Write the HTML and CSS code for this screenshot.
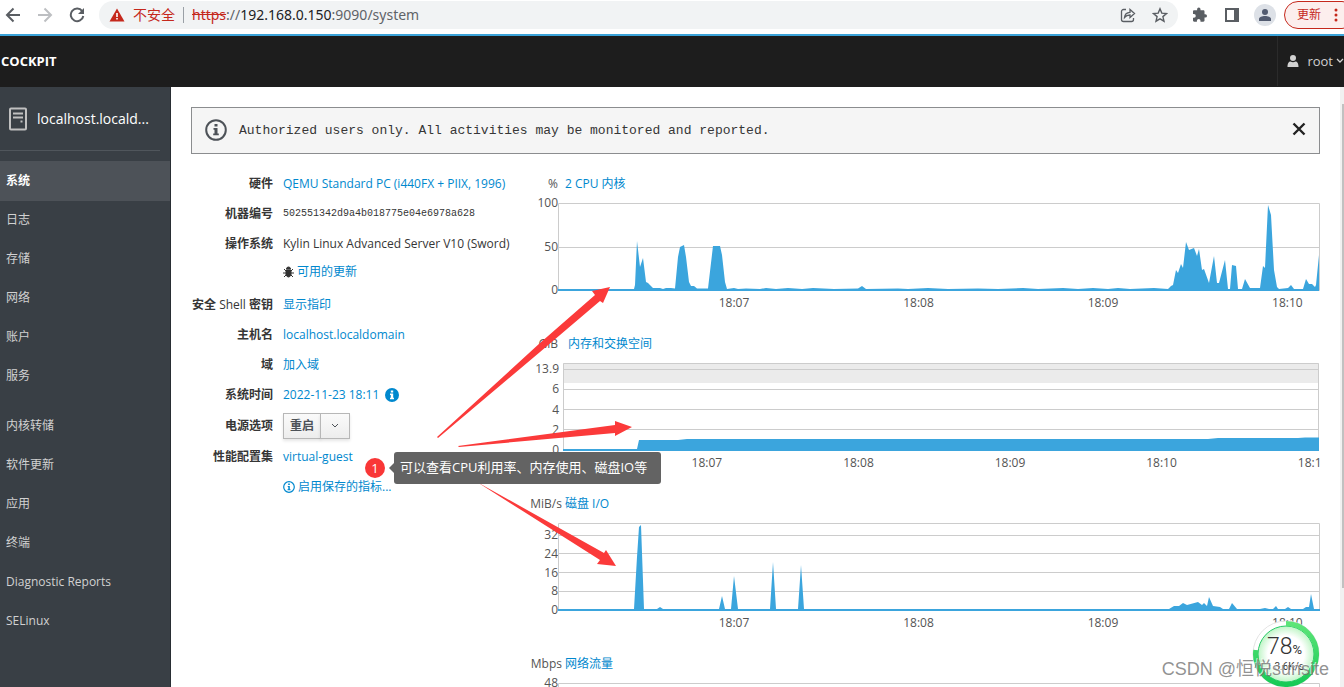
FILE: index.html
```html
<!DOCTYPE html>
<html lang="zh-CN">
<head>
<meta charset="utf-8">
<title>Cockpit</title>
<link rel="stylesheet" href="styles.css">
</head>
<body>
<div class="browser">
  <button class="tool" aria-label="后退"><svg width="16" height="16" viewBox="0 0 16 16" fill="none" stroke="#5a5e63" stroke-width="2"><path d="M15 8H2M8.500 1.500L2 8l6.500 6.500"/></svg></button>
  <button class="tool" aria-label="前进"><svg width="16" height="16" viewBox="0 0 16 16" fill="none" stroke="#bdbfc2" stroke-width="2"><path d="M1 8h13M7.500 1.500L14 8l-6.500 6.500"/></svg></button>
  <button class="tool" aria-label="刷新"><svg width="16" height="16" viewBox="0 0 16 16" fill="none" stroke="#5a5e63" stroke-width="2"><path d="M13.200 4.200A6.300 6.300 0 1 0 14.300 9"/><path d="M15 1v6H9z" fill="#5a5e63" stroke="none"/></svg></button>
  <div class="address">
    <svg width="16" height="14" viewBox="0 0 16 14"><path d="M8 0.500L15.500 13.500H0.500z" fill="#c5281c"/><path d="M7.200 5h1.600v4H7.200zM7.200 10h1.600v1.600H7.200z" fill="#fff"/></svg>
    <span class="unsafe">不安全</span>
    <span class="url"><s>https</s>://<b>192.168.0.150</b>:9090/system</span>
    <button class="tool" aria-label="分享"><svg width="16" height="16" viewBox="0 0 16 16" fill="none" stroke="#5a5e63" stroke-width="1.300"><path d="M6 2.500H3.500a2 2 0 0 0-2 2v8a2 2 0 0 0 2 2h8a2 2 0 0 0 2-2V11"/><path d="M4.500 10.500c.3-3.500 2-5 5.500-5.200V2.500l4.500 4-4.500 4V8C7.500 8 6 8.600 4.500 10.500z"/></svg></button>
    <button class="tool" aria-label="收藏"><svg width="16" height="16" viewBox="0 0 16 16" fill="none" stroke="#5a5e63" stroke-width="1.400"><path d="M8 1.800l1.800 4.300 4.700.4-3.600 3.100 1.100 4.600L8 11.800l-4 2.400 1.100-4.600-3.600-3.100 4.700-.4z"/></svg></button>
  </div>
  <button class="tool ext" aria-label="扩展程序"><svg width="16" height="16" viewBox="0 0 16 16" fill="#5a5e63"><path d="M13.300 7.200h-.8V4.500c0-.7-.5-1.200-1.200-1.200H8.500v-1a1.700 1.700 0 0 0-3.400 0v1H2.200C1.500 3.300 1 3.800 1 4.500v2.600h1a1.800 1.800 0 0 1 0 3.600H1v2.800c0 .7.500 1.200 1.200 1.200h2.700v-1a1.800 1.800 0 0 1 3.600 0v1h2.800c.7 0 1.200-.5 1.200-1.200v-2.900h.8a1.700 1.700 0 0 0 0-3.400z"/></svg></button>
  <button class="tool" aria-label="侧边栏"><svg width="16" height="16" viewBox="0 0 16 16"><path d="M1 1h14v14H1zM3 3v10h7V3z" fill="#5a5e63" fill-rule="evenodd"/></svg></button>
  <button class="profile" aria-label="用户"><svg width="14" height="14" viewBox="0 0 14 14" fill="#525b70"><circle cx="7" cy="4" r="3"/><path d="M1 13v-2c0-2 3-3 6-3s6 1 6 3v2z"/></svg></button>
  <button class="update">更新<svg width="4" height="14" viewBox="0 0 4 14" fill="#c5281c"><circle cx="2" cy="2" r="1.500"/><circle cx="2" cy="7" r="1.500"/><circle cx="2" cy="12" r="1.500"/></svg></button>
</div>
<header class="masthead">
  <strong>COCKPIT</strong>
  <button class="user"><svg width="12" height="12" viewBox="0 0 12 12" fill="#d1d1d1"><circle cx="6" cy="3" r="3"/><path d="M.5 12c0-4 1.500-5.500 3-5.500q2.500 1.500 5 0c1.500 0 3 1.500 3 5.500z"/></svg><span>root</span><svg width="9" height="6" viewBox="0 0 9 6" fill="none" stroke="#d1d1d1" stroke-width="1.300"><path d="M2 1l3 3 3-3"/></svg></button>
</header>
<div class="shell">
  <nav class="sidebar">
    <a class="host" href="#"><svg width="20" height="24" viewBox="0 0 20 24" fill="none" stroke="#c0c0c0" stroke-width="2"><rect x="2" y="1.500" width="16" height="21" rx="1"/><path d="M5 6.500h10M5 10.500h10"/><path d="M12.500 14.500h2" /></svg><span>localhost.locald...</span></a>
    <ul class="menu">
      <li><a class="active" href="#">系统</a></li>
      <li><a href="#">日志</a></li>
      <li><a href="#">存储</a></li>
      <li><a href="#">网络</a></li>
      <li><a href="#">账户</a></li>
      <li><a href="#">服务</a></li>
    </ul>
    <ul class="menu">
      <li><a href="#">内核转储</a></li>
      <li><a href="#">软件更新</a></li>
      <li><a href="#">应用</a></li>
      <li><a href="#">终端</a></li>
      <li><a href="#">Diagnostic Reports</a></li>
      <li><a href="#">SELinux</a></li>
    </ul>
  </nav>
  <main class="content">
    <div class="motd">
      <svg width="24" height="24" viewBox="0 0 24 24"><circle cx="12" cy="11" r="9.800" fill="none" stroke="#4d5258" stroke-width="2"/><path d="M10.500 5h3v2.500h-3zM9.500 9h4v5.500h1.300v1.700H9.200v-1.700h1.300v-3.800h-1z" fill="#4d5258"/></svg>
      <span>Authorized users only. All activities may be monitored and reported.</span>
      <button aria-label="关闭"><svg width="14" height="18" viewBox="0 0 14 18" stroke="#222" stroke-width="2.400"><path d="M1.500 1.500l11 11M12.500 1.500l-11 11"/></svg></button>
    </div>
    <div class="columns">
      <dl class="info">
        <dt>硬件</dt><dd><a href="#">QEMU Standard PC (i440FX + PIIX, 1996)</a></dd>
        <dt>机器编号</dt><dd class="machine">502551342d9a4b018775e04e6978a628</dd>
        <dt>操作系统</dt><dd>Kylin Linux Advanced Server V10 (Sword)</dd>
        <dd class="updates"><svg width="11" height="12" viewBox="0 0 11 12" fill="none" stroke="#333" stroke-width="1"><path d="M3.500 3a2 2 0 0 1 4 0zM3 4h5v5q-1 2-2.500 2T3 9z" fill="#333"/><path d="M0 7h11M1 3l2 2M10 3L8 5M1 11l2-2M10 11L8 9"/></svg><a href="#">可用的更新</a></dd>
        <dt>安全 <span>Shell</span> 密钥</dt><dd><a href="#">显示指印</a></dd>
        <dt>主机名</dt><dd><a href="#">localhost.localdomain</a></dd>
        <dt>域</dt><dd><a href="#">加入域</a></dd>
        <dt>系统时间</dt><dd class="time"><a href="#">2022-11-23 18:11</a><svg width="14" height="14" viewBox="0 0 14 14"><circle cx="7" cy="7" r="7" fill="#0088ce"/><path d="M5.800 2.500h2.400v2H5.800zM5 5.500h3.200v4.300H9v1.500H5V9.800h.8V7H5z" fill="#fff"/></svg></dd>
        <dt class="tall">电源选项</dt><dd class="power"><button>重启</button><button aria-label="更多"><svg width="8" height="6" viewBox="0 0 8 6" fill="none" stroke="#4d5258"><path d="M1 1l3 3 3-3"/></svg></button></dd>
        <dt>性能配置集</dt><dd><a href="#">virtual-guest</a></dd>
        <dd class="metrics"><a href="#"><svg width="12" height="12" viewBox="0 0 12 12"><circle cx="6" cy="6" r="5.300" fill="none" stroke="#0088ce" stroke-width="1.200"/><path d="M5.200 2.500h1.600v1.500H5.200zM4.700 5h2.100v3.300h.7v1H4.500v-1h.8V6h-.6z" fill="#0088ce"/></svg>启用保存的指标...</a></dd>
      </dl>
      <div class="charts">
        <section class="chart cpu">
          <h2><span>%</span><a href="#">2 CPU 内核</a></h2>
          <div class="graph">
            <div class="yaxis"><span>100</span><span>50</span><span>0</span></div>
            <div class="plot">
              <svg viewBox="0 0 762 88" preserveAspectRatio="none">
                <path class="grid" d="M0.500 .5H761.500V87.500H.5zM0 44.500H762"/>
                <path class="data" d="M0 88V86H76L77 82 79 38 82 64 85 55 88 79 90 80 95 85 102 85 105 86 108 85 113 85 117 85.500 120 54 122 44 126 42 128 54 131 79 133 83 136 83 139 85.500H150L155 43 162 43 164 52 167 79 169 86 176 85 180 86 188 85.500 202 86 208 85 218 86 230 85 244 86 255 85 276 86 300 85.500 304 83 308 86 340 85.500 350 86 370 85 390 86 420 85.500 440 86 465 85 480 86 505 85 520 86 535 85 550 86 560 85 572 86 596 85 610 86 613 83 615 82 618 67 620 70 623 61 625 65 628 39 631 47 636 45 639 53 641 46 644 67 646 66 651 80 656 53 659 80 661 80 667 57 670 86 672 86 674 62 678 63 680 86 684 86 687 76 692 85 702 85 705 63 707 65 710 2 713 12 716 67 719 84 721 86 730 85 733 82 736 86 745 86 748 76 751 81 754 81 757 84 758 82 761 52V88z"/>
              </svg>
              <div class="ticks"><span>18:07</span><span>18:08</span><span>18:09</span><span>18:10</span></div>
            </div>
          </div>
        </section>
        <section class="chart memory">
          <h2><span>GiB</span><a href="#">内存和交换空间</a></h2>
          <div class="graph">
            <div class="yaxis"><span>13.9</span><span>6</span><span>4</span><span>2</span><span>0</span></div>
            <div class="plot">
              <svg viewBox="0 0 757 88" preserveAspectRatio="none">
                <path d="M0 0H756V20H0z" fill="#ebebeb"/>
                <path class="grid" d="M.5 .5H755.500V87.500H.5zM0 6.500H756M0 26.500H756M0 46.500H756M0 66.500H756"/>
                <path class="data" d="M0 88V86H74L76 77H115L124 76H645L655 75H735L742 74.500H756V88z"/>
              </svg>
              <div class="ticks"><span>18:07</span><span>18:08</span><span>18:09</span><span>18:10</span><span>18:11</span></div>
            </div>
          </div>
        </section>
        <section class="chart disk">
          <h2><span>MiB/s</span><a href="#">磁盘 I/O</a></h2>
          <div class="graph">
            <div class="yaxis"><span>32</span><span>24</span><span>16</span><span>8</span><span>0</span></div>
            <div class="plot">
              <svg viewBox="0 0 762 88" preserveAspectRatio="none">
                <path class="grid" d="M.5 .5H761.500V87.500H.5zM0 12.500H762M0 30.500H762M0 49.500H762M0 68.500H762"/>
                <path class="data" d="M0 88V86H76L79 34 81 4 83 2 86 86H99L102 84 105 86H161L164 73 167 86H173L176 53 180 86H212L215 39 218 86H240L243 42 246 86H611L616 83 621 83 625 80 629 82 640 79 644 82 646 80 649 83 651 74 655 83 662 84 665 86H671L674 80 679 86H702L707 85 711 86H715L718 83 720 86H727L730 84 733 86H745L748 84 751 84 753 71 756 86H762V88z"/>
              </svg>
              <div class="ticks"><span>18:07</span><span>18:08</span><span>18:09</span><span>18:10</span></div>
            </div>
          </div>
        </section>
        <section class="chart network">
          <h2><span>Mbps</span><a href="#">网络流量</a></h2>
          <div class="graph">
            <div class="yaxis"><span>48</span></div>
            <div class="plot">
              <svg viewBox="0 0 762 88" preserveAspectRatio="none"><path class="grid" d="M.5 .5H761.500V87.500H.5z"/></svg>
            </div>
          </div>
        </section>
      </div>
    </div>
  </main>
  <div class="scrollbar"><div class="thumb"></div></div>
</div>
<svg class="arrows" width="1344" height="687" viewBox="0 0 1344 687" fill="#fb3a3a" aria-hidden="true">
  <path d="M437 437L540 343 595 295 592 291 610 287 603 303 600 301 540 352 438 438z"/>
  <path d="M458 446L615 425V421L632 427 615 436V433L459 447z"/>
  <path d="M477 482L604 553 606 550 616 566 597 564 600 560z"/>
</svg>
<span class="badge">1</span>
<div class="tip">可以查看CPU利用率、内存使用、磁盘IO等</div>
<div class="ball">
  <svg width="72" height="72" viewBox="0 0 72 72" aria-hidden="true">
    <defs><radialGradient id="glow"><stop offset=".65" stop-color="#fff"/><stop offset="1" stop-color="#bff5c6"/></radialGradient><linearGradient id="ring" x2="0" y2="1"><stop stop-color="#5de578"/><stop offset="1" stop-color="#18ca56"/></linearGradient></defs>
    <circle cx="36" cy="36" r="33" fill="#fff" stroke="#e4e4e4"/>
    <circle cx="36" cy="36" r="28" fill="url(#glow)" stroke="#29ca68"/>
    <path d="M36 5.500A30.500 30.500 0 1 1 5.800 32" fill="none" stroke="url(#ring)" stroke-width="5"/>
  </svg>
  <span class="percent">78<small>%</small></span>
  <span class="speed"><i>↑</i> 3.6K/s</span>
</div>
<div class="watermark">CSDN @恒悦sunsite</div>
</body>
</html>
```
FILE: styles.css
```css
* { box-sizing: border-box; }
body {
  margin: 0;
  height: 100vh;
  display: flex;
  flex-direction: column;
  overflow: hidden;
  position: relative;
  background: #fff;
  color: #363636;
  font: 12px/16px "Open Sans", "Noto Sans CJK SC", sans-serif;
}
a { color: #0088ce; text-decoration: none; }
button { font: inherit; padding: 0; border: 0; background: none; color: inherit; }
svg { flex: none; display: block; }
ul, dl, dd, h2 { margin: 0; padding: 0; }

.browser {
  flex: none;
  height: 36px;
  display: flex;
  align-items: flex-start;
  padding: 1px 0 0 5px;
  gap: 16px;
  border-bottom: 2px solid #3ba3d9;
  overflow: hidden;
}
.tool { height: 28px; display: flex; align-items: center; }
.address {
  flex: 1;
  height: 28px;
  display: flex;
  align-items: center;
  gap: 16px;
  margin-left: -2px;
  padding: 0 10px;
  border-radius: 14px;
  background: #f1f3f4;
}
.unsafe {
  color: #c5281c;
  font-size: 14px;
  margin-left: -8px;
  padding-right: 8px;
  border-right: 1px solid #9aa0a6;
}
.url { flex: 1; margin-left: -8px; color: #5f6368; font: 14px/20px "Noto Sans", sans-serif; }
.url b { color: #202124; font-weight: 400; }
.url s { color: #c5281c; }
.ext { margin-left: -2px; }
.profile {
  width: 22px;
  height: 22px;
  margin: 3px -8px 0 -2px;
  border-radius: 50%;
  background: #dde1e7;
  display: flex;
  align-items: center;
  justify-content: center;
}
.update {
  height: 28px;
  width: 72px;
  margin-right: -12px;
  padding-left: 12px;
  display: flex;
  align-items: center;
  gap: 13px;
  border: 1px solid #c5281c;
  border-radius: 14px;
  background: #fceeed;
  color: #c5281c;
}

.masthead {
  flex: none;
  height: 51px;
  display: flex;
  align-items: center;
  justify-content: space-between;
  padding: 0 0 2px 1px;
  background: #1d1d1d;
  color: #fff;
  font-size: 13px;
  overflow: hidden;
}
.user {
  height: 51px;
  display: flex;
  align-items: center;
  gap: 8px;
  padding-left: 9px;
  border-left: 1px solid #2b2b2b;
  color: #d1d1d1;
  font-size: 13px;
}
.user svg + span { margin-right: -6px; }

.shell { flex: 1; min-height: 0; display: flex; }
.sidebar {
  flex: none;
  width: 171px;
  background: #393f45;
  border-right: 1px solid #292e34;
}
.host {
  height: 64px;
  display: flex;
  align-items: center;
  gap: 9px;
  margin: 0 10px 10px 0;
  padding-left: 8px;
  border-bottom: 1px solid #50565c;
  color: #fff;
  font-size: 14px;
}
.menu { list-style: none; margin-bottom: 11px; }
.menu a { display: block; padding-left: 6px; line-height: 39px; color: #d1d1d1; }
.menu .active { background: #4d5258; box-shadow: 0 1px #4d5258; color: #fff; font-weight: 700; }

.content { flex: 1; min-width: 0; padding: 20px 20px 0; overflow: hidden; }
.motd {
  height: 47px;
  display: flex;
  align-items: center;
  gap: 11px;
  padding: 0 13px 0 12px;
  border: 1px solid #8b8d8f;
  background: #f5f5f5;
  font: 13px/20px "Liberation Mono", monospace;
}
.motd span { flex: 1; }
.columns { display: grid; grid-template-columns: 339px minmax(0, 1fr); margin-top: 15px; }

.info {
  display: grid;
  grid-template-columns: 82px minmax(0, 1fr);
  grid-auto-rows: min-content;
  column-gap: 10px;
  white-space: nowrap;
}
.info dt { text-align: right; font-weight: 700; line-height: 30px; }
.info dt span { font-weight: 400; }
.info .tall { line-height: 32px; }
.info dd { line-height: 30px; }
.info .machine { font: 10px/30px "Liberation Mono", monospace; }
.info .updates, .info .metrics { grid-column: 2; }
.info .updates { height: 31px; line-height: 26px; display: flex; gap: 3px; }
.updates svg { margin-top: 7px; }
.time { display: flex; align-items: center; gap: 6px; }
.power { display: flex; margin: 3px 0; }
.power button {
  height: 26px;
  width: 38px;
  border: 1px solid #b7b7b7;
  background: linear-gradient(#fafafa, #ededed);
  box-shadow: 0 2px 3px rgba(3, 3, 3, 0.1);
  color: #4d5258;
  line-height: 24px;
  font-weight: 600;
}
.power button + button {
  width: 30px;
  margin-left: -1px;
  display: flex;
  align-items: center;
  justify-content: center;
}
.metrics a { display: flex; align-items: center; gap: 3px; }

.chart { height: 160px; color: #545454; }
.chart h2 { display: flex; font-size: 12px; font-weight: 400; line-height: 30px; margin-bottom: 4px; }
.chart h2 span { width: 35px; padding-right: 7px; text-align: right; }
.memory h2 span { width: 38px; padding-right: 10px; }
.disk h2 span, .network h2 span { padding-right: 3px; }
.graph { display: flex; }
.yaxis {
  width: 28px;
  height: 103px;
  margin-top: -8px;
  display: flex;
  flex-direction: column;
  justify-content: space-between;
  text-align: right;
}
.memory .yaxis { width: 33px; height: 97px; margin-top: -2px; padding-right: 4px; }
.disk .yaxis { height: 91px; margin-top: 4px; }
.plot { flex: 1; min-width: 0; }
.plot svg { width: 100%; height: 88px; }
.grid { fill: none; stroke: #ccc; stroke-width: 1; }
.data { fill: #3ba5dd; }
.ticks { display: flex; margin-top: 4px; padding-left: 11%; overflow: hidden; }
.ticks span { flex: 0 0 27.2%; text-align: center; }
.memory .ticks { padding-left: 9%; }
.memory .ticks span { flex-basis: 22%; }

.scrollbar { width: 4px; padding-top: 17px; background: #f1f1f1; }
.thumb { height: 83%; margin-left: 2px; background: #c1c1c1; }

.arrows { position: absolute; left: 0; top: 0; pointer-events: none; }
.badge {
  position: absolute;
  left: 365px;
  top: 458px;
  width: 20px;
  border-radius: 10px;
  background: #f93737;
  color: #fff;
  font-size: 13px;
  line-height: 20px;
  text-align: center;
}
.tip {
  position: absolute;
  left: 394px;
  top: 452px;
  height: 32px;
  padding: 0 14px 0 6px;
  border-radius: 3px;
  background: #636363;
  color: #fff;
  font-size: 13px;
  line-height: 30px;
  white-space: nowrap;
}
.tip::before {
  content: "";
  position: absolute;
  right: 100%;
  top: 11px;
  border: 5px solid transparent;
  border-left: 0;
  border-right-color: #636363;
}
.ball { position: absolute; left: 1250px; top: 618px; width: 72px; height: 72px; text-align: center; }
.ball svg { position: absolute; }
.percent { position: absolute; left: 17px; top: 16px; color: #333; font: 300 23px/26px Roboto, sans-serif; white-space: nowrap; }
.percent small { font-size: 13px; font-weight: 400; }
.speed { position: absolute; left: 17px; top: 42px; font: 10px/14px Roboto, sans-serif; white-space: nowrap; }
.speed i { color: #288cf0; font-style: normal; }
.watermark {
  position: absolute;
  right: 15px;
  top: 656px;
  color: rgba(110, 110, 110, 0.75);
  font: 18px/26px "Liberation Sans", "Noto Sans CJK SC", sans-serif;
  text-shadow: -1px -1px 0 rgba(255, 255, 255, 0.7);
  white-space: nowrap;
}
```
